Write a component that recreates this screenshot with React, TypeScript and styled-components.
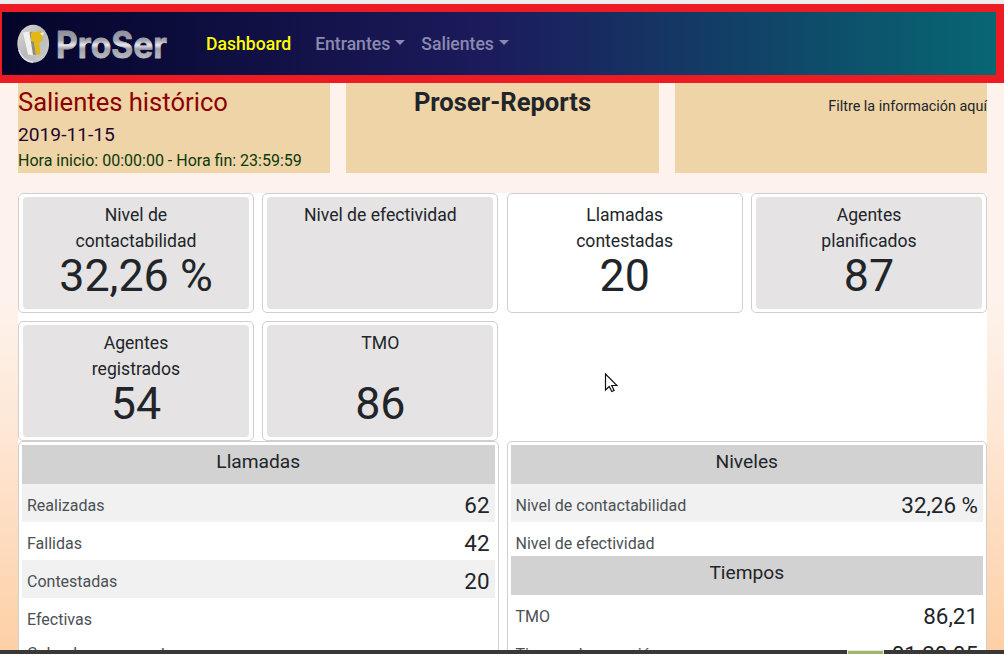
import React from "react";
import styled, { createGlobalStyle } from "styled-components";

const Global = createGlobalStyle`
  * { box-sizing: border-box; }
  html, body { margin: 0; height: 654px; overflow: hidden; }
  body { font-family: Roboto, "Liberation Sans", sans-serif; color: #212529; font-size: 16px; }
`;

const Page = styled.div`
  height: 654px;
  overflow: hidden;
  display: flex;
  flex-direction: column;
  background: #ededed;
  padding-top: 4px;
`;

const Navbar = styled.nav`
  flex: none;
  height: 79px;
  display: flex;
  align-items: center;
  padding: 0 0 0 14px;
  border: solid #ed1c24;
  border-width: 8px 8px 8px 2px;
  background: linear-gradient(90deg, #04042a 0%, #1c1b5c 49%, #076772 100%) padding-box;
`;

const Logo = styled.svg`
  display: block;
  flex: none;
  width: 156px;
  height: 46px;
  overflow: visible;
`;

const NavLink = styled.a<{ $active?: boolean; $gap: number }>`
  display: flex;
  align-items: center;
  margin-left: ${(p) => p.$gap}px;
  font-size: 17.6px;
  font-weight: 500;
  color: ${(p) => (p.$active ? "#ffff00" : "#8b8aae")};
`;

const Caret = styled.span`
  margin: -2px 0 0 5px;
  border-top: 5px solid currentColor;
  border-left: 5px solid transparent;
  border-right: 5px solid transparent;
`;

const Content = styled.main`
  flex: 1;
  min-height: 0;
  overflow: hidden;
  padding: 0 17px 0 18px;
  background: linear-gradient(180deg, #fdf3ec 0%, #fdf3ec 38%, #fee6d3 63%, #fdd0a6 100%);
`;

const Summary = styled.header`
  height: 90px;
  display: grid;
  grid-template-columns: repeat(3, minmax(0, 1fr));
  gap: 16px;
`;

const SummaryBox = styled.section<{ $align?: string }>`
  background: #efd4a7;
  text-align: ${(p) => p.$align || "left"};
  white-space: nowrap;
`;

const Heading = styled.h1<{ $color?: string; $bold?: boolean }>`
  margin: 3px 0 0;
  font-size: 25.6px;
  line-height: 32px;
  font-weight: ${(p) => (p.$bold ? 700 : 400)};
  color: ${(p) => p.$color || "#212529"};
`;

const DateLine = styled.div`
  font-size: 19.2px;
  line-height: 24px;
  margin-top: 5px;
  color: #1f0631;
`;

const HoursLine = styled.div`
  font-size: 16px;
  line-height: 24px;
  margin-top: 2px;
  color: #0b3a0b;
`;

const FilterLabel = styled.div`
  font-size: 14.4px;
  line-height: 22px;
  margin-top: 13px;
`;

const Board = styled.div`
  margin-top: 20px;
  background: #fff;
`;

const Tiles = styled.div`
  display: grid;
  grid-template-columns: repeat(4, minmax(0, 1fr));
  gap: 8px 8.4px;
`;

const Tile = styled.article`
  height: 120px;
  padding: 3px 4px;
  border: 1px solid #cfcfcf;
  border-radius: 5px;
  background: #fff;
`;

const TileBody = styled.div<{ $plain?: boolean }>`
  height: 100%;
  display: flex;
  flex-direction: column;
  align-items: center;
  justify-content: space-between;
  padding: 5px 36px 12px;
  text-align: center;
  border-radius: 4px;
  background: ${(p) => (p.$plain ? "#fff" : "#e5e3e4")};
`;

const TileLabel = styled.div`
  font-size: 17.6px;
  line-height: 26px;
`;

const TileValue = styled.div`
  font-size: 44.8px;
  line-height: 43px;
  white-space: nowrap;
`;

const Panels = styled.div`
  display: grid;
  grid-template-columns: repeat(2, minmax(0, 1fr));
  gap: 8px;
`;

const Panel = styled.section`
  height: 230px;
  padding: 3px;
  border: 1px solid #cfcfcf;
  border-radius: 5px;
  background: #fff;
`;

const PanelTitle = styled.h2`
  margin: 0;
  height: 39px;
  padding-top: 5px;
  font-size: 19.2px;
  line-height: 23px;
  font-weight: 400;
  text-align: center;
  background: #d2d2d2;
`;

const Row = styled.div<{ $striped?: boolean; $short?: boolean }>`
  height: ${(p) => (p.$short ? 34 : 38)}px;
  display: flex;
  align-items: flex-start;
  justify-content: space-between;
  padding: 5px 5px 0;
  line-height: 33px;
  color: #4b5055;
  background: ${(p) => (p.$striped ? "#f1f1f1" : "#fff")};
`;

const RowValue = styled.span`
  font-size: 22.4px;
  color: #212529;
`;

const Taskbar = styled.footer`
  flex: none;
  height: 4px;
  display: flex;
  padding-left: 847px;
  background: #393837;
`;

const TaskItem = styled.span`
  width: 37px;
  border: solid #e5eccf;
  border-width: 1px 1px 0;
  background: #a2b56d;
`;

const Pointer = styled.svg`
  position: absolute;
  left: 604px;
  top: 373px;
`;

const tiles = [
  { label: "Nivel de contactabilidad", value: "32,26 %" },
  { label: "Nivel de efectividad", value: "" },
  { label: "Llamadas contestadas", value: "20", plain: true },
  { label: "Agentes planificados", value: "87" },
  { label: "Agentes registrados", value: "54" },
  { label: "TMO", value: "86" },
];

function ProSerLogo() {
  return (
    <Logo viewBox="0 0 156 46">
      <defs>
        <linearGradient id="steel" gradientUnits="userSpaceOnUse" x1="0" y1="10" x2="0" y2="37">
          <stop offset="0" stopColor="#8f8f9b" />
          <stop offset="0.35" stopColor="#a4a4ae" />
          <stop offset="0.52" stopColor="#e9e9ed" />
          <stop offset="0.66" stopColor="#a0a0aa" />
          <stop offset="1" stopColor="#b9b9c2" />
        </linearGradient>
        <linearGradient id="coin" x1="0" y1="0" x2="1" y2="1">
          <stop offset="0" stopColor="#d9d9d8" />
          <stop offset="0.5" stopColor="#b9b9b9" />
          <stop offset="1" stopColor="#cfcfcf" />
        </linearGradient>
      </defs>
      <ellipse cx="17.2" cy="22.8" rx="15.9" ry="19" fill="url(#coin)" />
      <path d="M2.8 29Q6 40 17 41.4" fill="none" stroke="#e8e8e8" strokeWidth="1.2" />
      <path d="M7 11.5l7-1 4 24-6-1z" fill="#f0f0f0" />
      <path d="M13.5 11.5l2.5-1 4 23-3 .5z" fill="#8b8b86" />
      <path d="M15 11.5l10-1.5 1 4.5 1 4-4 3.5 1.5 11-4.5 1-2-13-3-1z" fill="#e3b714" />
      <path d="M24 12.5l4-1.5-1 4z" fill="#f3f0dc" />
      <text x="40" y="36.5" textLength="111" lengthAdjust="spacingAndGlyphs" fontFamily="Inter, sans-serif" fontWeight="700" fontSize="36.5" fill="url(#steel)" stroke="url(#steel)" strokeWidth="0.8" strokeLinejoin="round">ProSer</text>
    </Logo>
  );
}

export default function App() {
  return (
    <Page>
      <Global />
      <Navbar>
        <ProSerLogo />
        <NavLink $active $gap={34}>Dashboard</NavLink>
        <NavLink $gap={24}>Entrantes<Caret /></NavLink>
        <NavLink $gap={16}>Salientes<Caret /></NavLink>
      </Navbar>
      <Content>
        <Summary>
          <SummaryBox>
            <Heading $color="#8b0000">Salientes histórico</Heading>
            <DateLine>2019-11-15</DateLine>
            <HoursLine>Hora inicio: 00:00:00 - Hora fin: 23:59:59</HoursLine>
          </SummaryBox>
          <SummaryBox $align="center">
            <Heading $bold>Proser-Reports</Heading>
          </SummaryBox>
          <SummaryBox $align="right">
            <FilterLabel>Filtre la información aquí</FilterLabel>
          </SummaryBox>
        </Summary>
        <Board>
          <Tiles>
            {tiles.map((t) => (
              <Tile key={t.label}>
                <TileBody $plain={t.plain}>
                  <TileLabel>{t.label}</TileLabel>
                  <TileValue>{t.value}</TileValue>
                </TileBody>
              </Tile>
            ))}
          </Tiles>
          <Panels>
            <Panel>
              <PanelTitle>Llamadas</PanelTitle>
              <Row $striped>Realizadas<RowValue>62</RowValue></Row>
              <Row>Fallidas<RowValue>42</RowValue></Row>
              <Row $striped>Contestadas<RowValue>20</RowValue></Row>
              <Row $short>Efectivas</Row>
              <Row>Colgadas por agente</Row>
            </Panel>
            <Panel>
              <PanelTitle>Niveles</PanelTitle>
              <Row $striped>Nivel de contactabilidad<RowValue>32,26 %</RowValue></Row>
              <Row $short>Nivel de efectividad</Row>
              <PanelTitle>Tiempos</PanelTitle>
              <Row>TMO<RowValue>86,21</RowValue></Row>
              <Row>Tiempo de conexión<RowValue>01:20:05</RowValue></Row>
            </Panel>
          </Panels>
        </Board>
      </Content>
      <Taskbar><TaskItem /></Taskbar>
      <Pointer width="14" height="20" viewBox="0 0 14 20">
        <path d="M1.5 1v16l3.7-3.5 2.6 5 2.3-1-2.4-5H13z" fill="#fff" stroke="#111" strokeWidth="1.2" />
      </Pointer>
    </Page>
  );
}
